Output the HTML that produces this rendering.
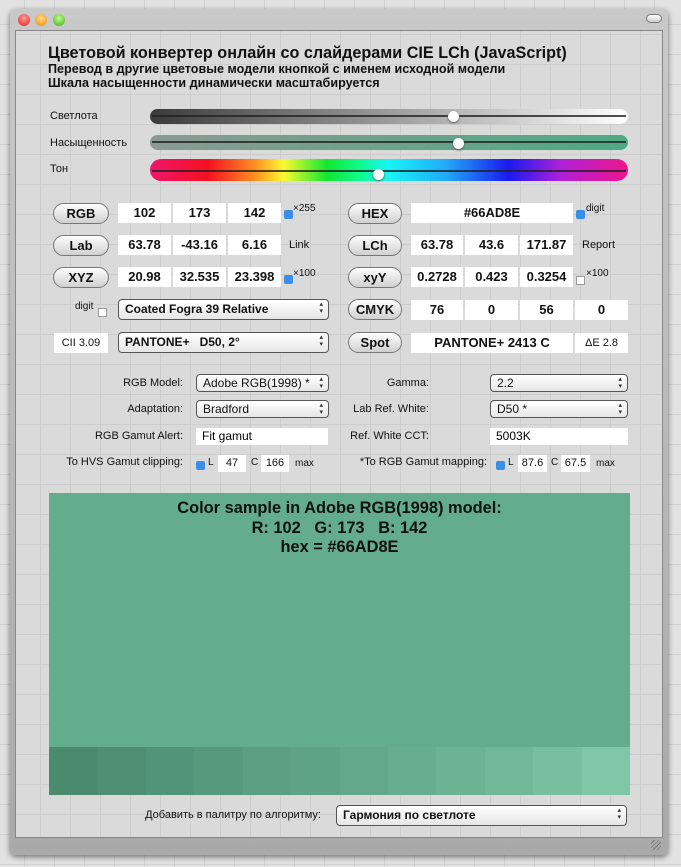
<!DOCTYPE html>
<html><head><meta charset="utf-8"><style>
*{box-sizing:border-box;margin:0;padding:0}
body{width:681px;height:867px;overflow:hidden;position:relative;font-family:"Liberation Sans","DejaVu Sans",sans-serif;
background-color:#e2e2e2;background-image:linear-gradient(#d0d0d0 1px,transparent 1px),linear-gradient(90deg,#d0d0d0 1px,transparent 1px);background-size:30px 30px;background-position:-6px -6px}
.abs{position:absolute}
.win{left:10px;top:9px;width:658px;height:846px;border-radius:6px;background:linear-gradient(#c9c9c9,#a9a9a9);box-shadow:0 2px 6px rgba(0,0,0,.5)}
.content{left:15px;top:30px;width:648px;height:808px;background-color:#dadada;background-image:linear-gradient(#cdcdcd 1px,transparent 1px),linear-gradient(90deg,#cdcdcd 1px,transparent 1px);background-size:30px 30px;background-position:-6px 3px;border:1px solid #888}
.dot{width:12px;height:12px;border-radius:50%;top:14px}
.t{white-space:nowrap;color:#111}
.btn{height:21px;border:1px solid #777;border-radius:11px;background:linear-gradient(#fdfdfd,#d0d0d0);font-weight:bold;font-size:13px;text-align:center;line-height:19px;color:#111}
.inp{background:#fff;height:20px;font-size:13px;font-weight:bold;text-align:center;line-height:20px;color:#111}
.sel{border:1px solid #555;border-radius:4px;background:linear-gradient(#fff,#e6e6e6);font-size:12px;padding-left:6px;color:#111}
.sel:after{content:"▴\A▾";white-space:pre;position:absolute;right:5px;top:1px;font-size:7px;line-height:7px;color:#333}
.cb{width:9px;height:9px;background:#3b8ee8;border-radius:2px}
.cbo{width:9px;height:9px;background:#fff;border:1px solid #999}
.sm{font-size:11px}
.track{left:150px;width:478px;border-radius:8px}
.line{position:absolute;left:2px;right:2px;height:2px;background:#222;opacity:.8}
.knob{position:absolute;width:11px;height:11px;border-radius:50%;background:#fff;box-shadow:0 1px 2px #555}
</style></head><body>
<div class="abs win"></div>
<div class="abs dot" style="left:18px;background:radial-gradient(circle at 50% 35%,#f99,#d22)"></div>
<div class="abs dot" style="left:35px;background:radial-gradient(circle at 50% 35%,#fd8,#e80)"></div>
<div class="abs dot" style="left:53px;background:radial-gradient(circle at 50% 35%,#bf8,#4a2)"></div>
<div class="abs" style="left:646px;top:14px;width:16px;height:9px;border-radius:5px;border:1px solid #777;background:linear-gradient(#fff,#ccc)"></div>
<div class="abs content"></div>

<div class="abs t" style="left:48px;top:44px;font-size:16.2px;font-weight:bold">Цветовой конвертер онлайн со слайдерами CIE LCh (JavaScript)</div>
<div class="abs t" style="left:48px;top:63px;font-size:12.6px;font-weight:bold;line-height:13.5px">Перевод в другие цветовые модели кнопкой с именем исходной модели<br>Шкала насыщенности динамически масштабируется</div>

<div class="abs t sm" style="left:50px;top:110px">Светлота</div>
<div class="abs t sm" style="left:50px;top:137px">Насыщенность</div>
<div class="abs t sm" style="left:50px;top:163px">Тон</div>
<div class="abs track" style="top:109px;height:15px;background:linear-gradient(90deg,#3a3a3a,#888 40%,#ccc 75%,#fff)"><div class="line" style="top:6px"></div><div class="knob" style="left:298px;top:2px"></div></div>
<div class="abs track" style="top:135px;height:15px;background:linear-gradient(90deg,#8a9a94,#4eaa84)"><div class="line" style="top:6px"></div><div class="knob" style="left:303px;top:3px"></div></div>
<div class="abs track" style="top:159px;height:22px;border-radius:11px;background:linear-gradient(90deg,#f0156a,#f51020 12%,#ff9020 22%,#fafa30 28%,#10e830 37%,#10fa90 44%,#18f4f8 50%,#20aaf8 62%,#1a1aef 75%,#b020d8 86%,#f0158a)"><div class="line" style="top:11px"></div><div class="knob" style="left:223px;top:10px"></div></div>

<div class="abs btn" style="left:53px;top:203px;width:56px">RGB</div>
<div class="abs inp" style="left:118px;top:203px;width:53px">102</div>
<div class="abs inp" style="left:173px;top:203px;width:53px">173</div>
<div class="abs inp" style="left:228px;top:203px;width:53px">142</div>
<div class="abs cb" style="left:284px;top:210px"></div><div class="abs t" style="left:293px;top:203px;font-size:10px">×255</div>
<div class="abs btn" style="left:348px;top:203px;width:54px">HEX</div>
<div class="abs inp" style="left:411px;top:203px;width:162px">#66AD8E</div>
<div class="abs cb" style="left:576px;top:210px"></div><div class="abs t" style="left:586px;top:203px;font-size:10px">digit</div>

<div class="abs btn" style="left:53px;top:235px;width:56px">Lab</div>
<div class="abs inp" style="left:118px;top:235px;width:53px">63.78</div>
<div class="abs inp" style="left:173px;top:235px;width:53px">-43.16</div>
<div class="abs inp" style="left:228px;top:235px;width:53px">6.16</div>
<div class="abs t sm" style="left:289px;top:239px">Link</div>
<div class="abs btn" style="left:348px;top:235px;width:54px">LCh</div>
<div class="abs inp" style="left:411px;top:235px;width:52px">63.78</div>
<div class="abs inp" style="left:465px;top:235px;width:53px">43.6</div>
<div class="abs inp" style="left:520px;top:235px;width:53px">171.87</div>
<div class="abs t sm" style="left:582px;top:239px">Report</div>

<div class="abs btn" style="left:53px;top:267px;width:56px">XYZ</div>
<div class="abs inp" style="left:118px;top:267px;width:53px">20.98</div>
<div class="abs inp" style="left:173px;top:267px;width:53px">32.535</div>
<div class="abs inp" style="left:228px;top:267px;width:53px">23.398</div>
<div class="abs cb" style="left:284px;top:275px"></div><div class="abs t" style="left:293px;top:268px;font-size:10px">×100</div>
<div class="abs btn" style="left:348px;top:267px;width:54px">xyY</div>
<div class="abs inp" style="left:411px;top:267px;width:52px">0.2728</div>
<div class="abs inp" style="left:465px;top:267px;width:53px">0.423</div>
<div class="abs inp" style="left:520px;top:267px;width:53px">0.3254</div>
<div class="abs cbo" style="left:576px;top:276px"></div><div class="abs t" style="left:586px;top:268px;font-size:10px">×100</div>

<div class="abs t" style="left:75px;top:301px;font-size:10px">digit</div><div class="abs cbo" style="left:98px;top:308px"></div>
<div class="abs sel" style="left:118px;top:299px;width:211px;height:21px;line-height:19px;font-weight:bold">Coated Fogra 39 Relative</div>
<div class="abs btn" style="left:348px;top:299px;width:54px">CMYK</div>
<div class="abs inp" style="left:411px;top:300px;width:52px">76</div>
<div class="abs inp" style="left:465px;top:300px;width:53px">0</div>
<div class="abs inp" style="left:520px;top:300px;width:53px">56</div>
<div class="abs inp" style="left:575px;top:300px;width:53px">0</div>

<div class="abs inp" style="left:54px;top:333px;width:54px;font-weight:normal;font-size:11px">CII 3.09</div>
<div class="abs sel" style="left:118px;top:332px;width:211px;height:21px;line-height:19px;font-weight:bold">PANTONE+&nbsp;&nbsp; D50, 2°</div>
<div class="abs btn" style="left:348px;top:332px;width:54px">Spot</div>
<div class="abs inp" style="left:411px;top:333px;width:162px">PANTONE+ 2413 C</div>
<div class="abs inp" style="left:575px;top:333px;width:53px;font-weight:normal;font-size:11px">ΔE 2.8</div>

<div class="abs t sm" style="right:498px;top:377px">RGB Model:</div>
<div class="abs sel" style="left:196px;top:374px;width:133px;height:18px;line-height:16px">Adobe RGB(1998) *</div>
<div class="abs t sm" style="right:252px;top:377px">Gamma:</div>
<div class="abs sel" style="left:490px;top:374px;width:138px;height:18px;line-height:16px">2.2</div>
<div class="abs t sm" style="right:498px;top:403px">Adaptation:</div>
<div class="abs sel" style="left:196px;top:400px;width:133px;height:18px;line-height:16px">Bradford</div>
<div class="abs t sm" style="right:252px;top:403px">Lab Ref. White:</div>
<div class="abs sel" style="left:490px;top:400px;width:138px;height:18px;line-height:16px">D50 *</div>
<div class="abs t sm" style="right:498px;top:430px">RGB Gamut Alert:</div>
<div class="abs" style="left:196px;top:428px;width:132px;height:17px;background:#fff;font-size:12px;padding-left:6px;line-height:17px">Fit gamut</div>
<div class="abs t sm" style="right:252px;top:430px">Ref. White CCT:</div>
<div class="abs" style="left:490px;top:428px;width:138px;height:17px;background:#fff;font-size:12px;padding-left:6px;line-height:17px">5003K</div>
<div class="abs t sm" style="right:498px;top:456px">To HVS Gamut clipping:</div>
<div class="abs cb" style="left:196px;top:461px"></div><div class="abs t" style="left:208px;top:457px;font-size:10px">L</div>
<div class="abs inp" style="left:218px;top:455px;width:28px;height:17px;line-height:17px;font-weight:normal;font-size:11px">47</div>
<div class="abs t" style="left:251px;top:457px;font-size:10px">C</div>
<div class="abs inp" style="left:261px;top:455px;width:28px;height:17px;line-height:17px;font-weight:normal;font-size:11px">166</div>
<div class="abs t" style="left:295px;top:458px;font-size:10px">max</div>
<div class="abs t sm" style="right:194px;top:456px">*To RGB Gamut mapping:</div>
<div class="abs cb" style="left:496px;top:461px"></div><div class="abs t" style="left:508px;top:457px;font-size:10px">L</div>
<div class="abs inp" style="left:518px;top:455px;width:29px;height:17px;line-height:17px;font-weight:normal;font-size:11px">87.6</div>
<div class="abs t" style="left:551px;top:457px;font-size:10px">C</div>
<div class="abs inp" style="left:561px;top:455px;width:29px;height:17px;line-height:17px;font-weight:normal;font-size:11px">67.5</div>
<div class="abs t" style="left:596px;top:458px;font-size:10px">max</div>

<div class="abs" style="left:49px;top:493px;width:581px;height:302px;background:#64ac8e"></div>
<div class="abs t" style="left:49px;width:581px;top:499px;text-align:center;font-size:16.4px;font-weight:bold;line-height:19.5px">Color sample in Adobe RGB(1998) model:<br>R: 102&nbsp;&nbsp; G: 173&nbsp;&nbsp; B: 142<br>hex = #66AD8E</div>
<div class="abs" style="left:49px;top:747px;width:581px;height:48px;display:flex">
<div style="flex:1;background:#4a8b70"></div><div style="flex:1;background:#4e8f74"></div><div style="flex:1;background:#529479"></div><div style="flex:1;background:#56997d"></div><div style="flex:1;background:#5b9e82"></div><div style="flex:1;background:#5fa386"></div><div style="flex:1;background:#63a88b"></div><div style="flex:1;background:#67ad8f"></div><div style="flex:1;background:#6cb394"></div><div style="flex:1;background:#71b899"></div><div style="flex:1;background:#78bf9f"></div><div style="flex:1;background:#7fc7a7"></div>
</div>
<div class="abs t sm" style="right:360px;top:809px">Добавить в палитру по алгоритму:</div>
<div class="abs sel" style="left:336px;top:805px;width:291px;height:21px;line-height:19px;font-weight:bold">Гармония по светлоте</div>
<div class="abs" style="left:651px;top:840px;width:10px;height:10px;background:repeating-linear-gradient(135deg,transparent 0 2px,#777 2px 3px)"></div>
</body></html>
